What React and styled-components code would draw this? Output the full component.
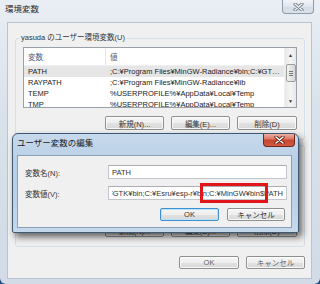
import React from 'react';
import styled, { createGlobalStyle } from 'styled-components';

const GlobalStyle = createGlobalStyle`
  html, body {
    margin: 0;
    padding: 0;
  }
  body {
    width: 320px;
    height: 284px;
    overflow: hidden;
    background: #1f4d86;
    font-family: "Liberation Sans", "Noto Sans CJK JP", sans-serif;
    font-size: 7.5px;
    color: #1e1e1e;
  }
  * {
    box-sizing: border-box;
  }
`;

const Window = styled.div`
  position: relative;
  width: 320px;
  height: 284px;
  display: flex;
  flex-direction: column;
  background: linear-gradient(#e9eef4, #d9e1ea 40%, #d2dbe6);
  border-radius: 0 0 6px 6px;
`;

const TitleBar = styled.div`
  height: 22px;
  flex: none;
  display: flex;
  justify-content: space-between;
  align-items: flex-start;
  padding-left: 5px;
`;

const Title = styled.div`
  padding-top: 4px;
  line-height: 10px;
  font-size: ${p => p.$size || 8.5}px;
  color: ${p => p.$color || '#2a2a2a'};
`;

const CloseButton = styled.div`
  width: 32px;
  height: ${p => p.$h || 14}px;
  margin-right: ${p => p.$mr || 6}px;
  display: flex;
  align-items: center;
  justify-content: center;
  border: 1px solid ${p => (p.$active ? '#6b2a20' : '#8d9cab')};
  border-top: none;
  border-radius: 0 0 4px 4px;
  background: ${p =>
    p.$active
      ? 'linear-gradient(#eab0a3 0%, #dc7a68 40%, #c8462f 52%, #d35a40 100%)'
      : 'linear-gradient(#f1f4f8, #e0e6ed 50%, #d3dbe5 51%, #dbe2ea)'};
`;

const Client = styled.div`
  flex: 1;
  margin: 0 8px 5px 7px;
  border: 1px solid #b7c4d2;
  background: #f0f0f0;
  padding: 10px 6px 0 7px;
  display: flex;
  flex-direction: column;
`;

const Group = styled.fieldset`
  margin: 0;
  padding: 4px 7px 9px 7px;
  border: 1px solid #d5dfe5;
  border-radius: 3px;
  min-width: 0;
`;

const Legend = styled.legend`
  padding: 0 2px;
  margin-left: -4px;
  line-height: 10px;
  color: #333;
`;

const ListView = styled.div`
  height: 61px;
  display: flex;
  border: 1px solid #9aa0a8;
  background: #fff;
  overflow: hidden;
`;

const Table = styled.div`
  flex: 1;
  min-width: 0;
  display: flex;
  flex-direction: column;
`;

const HeaderRow = styled.div`
  height: 18px;
  flex: none;
  display: grid;
  grid-template-columns: 82px 1fr;
  border-bottom: 1px solid #eef0f2;
`;

const HeaderCell = styled.div`
  display: flex;
  align-items: center;
  padding-left: 4px;
  color: #4c607a;
  border-right: ${p => (p.$sep ? '1px solid #e3e6ea' : 'none')};
`;

const Row = styled.div`
  height: 11px;
  flex: none;
  display: grid;
  grid-template-columns: 82px 1fr;
  align-items: center;
  background: ${p => (p.$selected ? '#e6e6e6' : 'transparent')};
`;

const Cell = styled.div`
  padding-left: 4px;
  white-space: nowrap;
  overflow: hidden;
  text-overflow: ellipsis;
  line-height: 11px;
  color: #222;
`;

const ScrollBar = styled.div`
  width: 12px;
  flex: none;
  display: flex;
  flex-direction: column;
  align-items: center;
  background: linear-gradient(90deg, #e8e8e8, #f4f4f4 50%, #e8e8e8);
  border-left: 1px solid #f0f0f0;
`;

const Arrow = styled.div`
  height: ${p => p.$h || 13}px;
  flex: none;
  display: flex;
  align-items: center;
  justify-content: center;
  font-size: 5px;
  color: #333;
`;

const Thumb = styled.div`
  width: 10px;
  height: 18px;
  flex: none;
  margin-top: 2px;
  border: 1px solid #9c9c9c;
  border-radius: 2px;
  background: linear-gradient(90deg, #f4f4f4, #e4e4e4 50%, #d6d6d6);
  display: flex;
  flex-direction: column;
  align-items: center;
  justify-content: center;
  gap: 1px;
`;

const Grip = styled.span`
  width: 4px;
  height: 1px;
  background: #777;
`;

const Track = styled.div`
  flex: 1;
`;

const ButtonRow = styled.div`
  display: flex;
  justify-content: flex-end;
  gap: ${p => p.$gap || 7}px;
  margin-top: ${p => p.$mt || 8}px;
  padding-right: ${p => p.$pr || 0}px;
`;

const Button = styled.button`
  width: ${p => p.$w || 59}px;
  height: ${p => p.$h || 14}px;
  padding: 0;
  font: inherit;
  font-size: 7.5px;
  color: ${p => (p.$dim ? '#666' : '#333')};
  border: 1px solid ${p => (p.$default ? '#3e8fd0' : '#8e8f8f')};
  border-radius: 2px;
  background: linear-gradient(#f6f6f6 0%, #eeeeee 50%, #e2e2e2 51%, #d8d8d8 100%);
  box-shadow: inset 0 0 0 1px ${p => (p.$default ? '#b9e3fb' : 'rgba(255,255,255,0.75)')};
`;

const Dialog = styled.div`
  position: absolute;
  left: 12px;
  top: 133px;
  width: 287px;
  height: 100px;
  display: flex;
  flex-direction: column;
  border: 1px solid #3f5873;
  border-radius: 6px 6px 2px 2px;
  background: linear-gradient(#c7d9ec, #b9cfe6 30%, #bcd1e8 70%, #c6d8ec);
  box-shadow: 3px 4px 7px rgba(0, 0, 0, 0.6);
`;

const DialogTitleBar = styled.div`
  height: 21px;
  flex: none;
  display: flex;
  justify-content: space-between;
  align-items: flex-start;
  padding-left: 4px;
`;

const DialogClient = styled.div`
  flex: 1;
  margin: 0 6px 4px 4px;
  border: 1px solid #8aa1b9;
  background: #f0f0f0;
  padding: 9px 4px 0 7px;
  display: flex;
  flex-direction: column;
`;

const FormGrid = styled.div`
  display: grid;
  grid-template-columns: 83px 1fr;
  row-gap: 7px;
  align-items: center;
`;

const Label = styled.div`
  color: #333;
`;

const Field = styled.div`
  position: relative;
  height: 14px;
  display: flex;
  align-items: center;
  padding: 0 3px;
  border: 1px solid #c3c6cc;
  border-top-color: #abadb3;
  background: #fff;
  white-space: nowrap;
  color: #333;
`;

const FieldText = styled.span`
  flex: none;
`;

const FieldClip = styled.div`
  position: absolute;
  inset: 0 3px;
  overflow: hidden;
  display: flex;
  align-items: center;
  justify-content: flex-end;
`;

const RedMark = styled.div`
  position: absolute;
  left: 91px;
  top: -4px;
  width: 68px;
  height: 20px;
  border: 3px solid #e2151b;
`;

const CloseX = ({ active }) => (
  <svg width="11" height="8" viewBox="0 0 11 8">
    <path d="M2 1 L9 7 M9 1 L2 7" stroke={active ? '#5a1c12' : '#6f7b88'} strokeWidth="3.2" strokeLinecap="round" />
    <path d="M2 1 L9 7 M9 1 L2 7" stroke={active ? '#ffffff' : '#eef2f6'} strokeWidth="1.6" strokeLinecap="round" />
  </svg>
);

const userVars = [
  ['PATH', ';C:¥Program Files¥MinGW-Radiance¥bin;C:¥GTK¥bin;C:¥Esru¥esp-r¥bin'],
  ['RAYPATH', ';C:¥Program Files¥MinGW-Radiance¥lib'],
  ['TEMP', '%USERPROFILE%¥AppData¥Local¥Temp'],
  ['TMP', '%USERPROFILE%¥AppData¥Local¥Temp'],
];

const systemVars = [
  ['ComSpec', 'C:¥Windows¥system32¥cmd.exe'],
  ['FP_NO_HOST_C...', 'NO'],
  ['NUMBER_OF_P...', '2'],
  ['OS', 'Windows_NT'],
];

const VarList = ({ rows, selected }) => (
  <ListView>
    <Table>
      <HeaderRow>
        <HeaderCell $sep>変数</HeaderCell>
        <HeaderCell>値</HeaderCell>
      </HeaderRow>
      {rows.map(([name, value], i) => (
        <Row key={name} $selected={i === selected}>
          <Cell>{name}</Cell>
          <Cell>{value}</Cell>
        </Row>
      ))}
    </Table>
    <ScrollBar>
      <Arrow $h={14}>▲</Arrow>
      <Thumb>
        <Grip />
        <Grip />
        <Grip />
      </Thumb>
      <Track />
      <Arrow $h={12}>▼</Arrow>
    </ScrollBar>
  </ListView>
);

const VarGroup = ({ title, rows, selected }) => (
  <Group>
    <Legend>{title}</Legend>
    <VarList rows={rows} selected={selected} />
    <ButtonRow>
      <Button>新規(N)...</Button>
      <Button>編集(E)...</Button>
      <Button $w={60}>削除(D)</Button>
    </ButtonRow>
  </Group>
);

const EditDialog = () => (
  <Dialog>
    <DialogTitleBar>
      <Title $color="#1a1a1a">ユーザー変数の編集</Title>
      <CloseButton $active $h={13} $mr={3}>
        <CloseX active />
      </CloseButton>
    </DialogTitleBar>
    <DialogClient>
      <FormGrid>
        <Label>変数名(N):</Label>
        <Field>
          <FieldText>PATH</FieldText>
        </Field>
        <Label>変数値(V):</Label>
        <Field>
          <FieldClip>
            <FieldText>
              ;C:¥Program Files¥MinGW-Radiance¥bin;C:¥GTK¥bin;C:¥Esru¥esp-r¥bin;C:¥MinGW¥bin$PATH
            </FieldText>
          </FieldClip>
          <RedMark />
        </Field>
      </FormGrid>
      <ButtonRow $mt={8} $gap={8} $pr={2}>
        <Button $default $h={13}>OK</Button>
        <Button $w={58} $h={13}>キャンセル</Button>
      </ButtonRow>
    </DialogClient>
  </Dialog>
);

export default function App() {
  return (
    <>
      <GlobalStyle />
      <Window>
        <TitleBar>
          <Title>環境変数</Title>
          <CloseButton>
            <CloseX />
          </CloseButton>
        </TitleBar>
        <Client>
          <VarGroup title="yasuda のユーザー環境変数(U)" rows={userVars} selected={0} />
          <VarGroup title="システム環境変数(S)" rows={systemVars} selected={-1} />
          <ButtonRow $mt={9}>
            <Button $dim $w={60} $h={13}>OK</Button>
            <Button $dim $w={59} $h={13}>キャンセル</Button>
          </ButtonRow>
        </Client>
        <EditDialog />
      </Window>
    </>
  );
}
